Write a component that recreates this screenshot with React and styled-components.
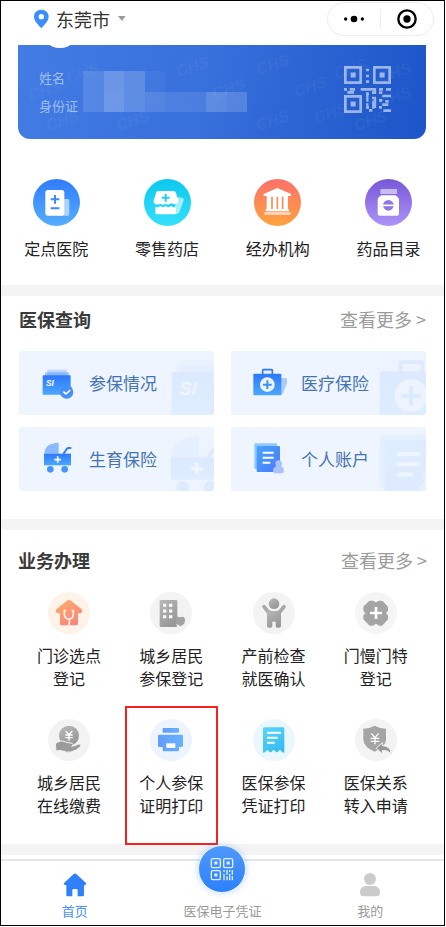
import React from 'react'
import styled, { createGlobalStyle } from 'styled-components'

const GlobalStyle = createGlobalStyle`
    * {
        box-sizing: border-box;
    }
    body {
        margin: 0;
        background: #fff;
        font-family: "Noto Sans CJK SC", "Noto Sans", sans-serif;
    }
    button {
        margin: 0;
        padding: 0;
        border: none;
        background: none;
        font: inherit;
        color: inherit;
        cursor: pointer;
    }
    a {
        color: inherit;
        text-decoration: none;
    }
    svg {
        display: block;
        flex-shrink: 0;
    }
    h2 {
        margin: 0;
    }
`

const Page = styled.div`
    margin: 0 1px 1px 0;
    border: 1px solid #000;
    background: #fff;
`

const Header = styled.header`
    display: flex;
    align-items: center;
    justify-content: space-between;
    height: 36px;
    margin-bottom: 8px;
    padding: 0 10px 0 32px;
`

const City = styled.button`
    display: flex;
    align-items: center;
    gap: 6px;
    font-size: 18px;
    line-height: 28px;
    color: #333;
`

const Capsule = styled.div`
    display: flex;
    align-items: center;
    width: 107px;
    height: 34px;
    border: 1px solid #ededed;
    border-radius: 17px;
`

const CapsuleButton = styled.button`
    flex: 1;
    display: flex;
    justify-content: center;
    & + & {
        border-left: 1px solid #ececec;
    }
`

const InsuredCard = styled.section`
    position: relative;
    display: flex;
    justify-content: space-between;
    align-items: flex-start;
    height: 94px;
    margin: 0 18px 0 17px;
    padding: 21px 35px 0 21px;
    border-radius: 0 0 12px 12px;
    background: linear-gradient(100deg, #427ce4 0%, #3870dc 45%, #1c55c8 100%);
    overflow: hidden;
`

const CardArt = styled.svg`
    position: absolute;
    top: 0;
    left: 0;
`

const Fields = styled.div`
    position: relative;
    display: flex;
    flex-direction: column;
    gap: 8px;
    padding-top: 2px;
    font-size: 13px;
    line-height: 20px;
    color: rgba(255, 255, 255, 0.52);
`

const QuickNav = styled.nav`
    display: grid;
    grid-template-columns: repeat(4, 1fr);
    padding: 40px 0 25px;
`

const QuickItem = styled.a`
    display: flex;
    flex-direction: column;
    align-items: center;
    gap: 10px;
    font-size: 16px;
    line-height: 24px;
    color: #222;
`

const Disc = styled.span`
    display: block;
    width: ${({ $size }) => $size}px;
    height: ${({ $size }) => $size}px;
    border-radius: 50%;
    background: ${({ $bg }) => $bg};
`

const Band = styled.div`
    height: 11px;
    background: #f4f4f4;
`

const Section = styled.section`
    padding: ${({ $pad }) => $pad};
`

const SectionHead = styled.div`
    display: flex;
    justify-content: space-between;
    align-items: center;
    margin-bottom: 18px;
    line-height: 28px;
`

const SectionTitle = styled.h2`
    font-size: 18px;
    font-weight: 700;
    color: #3a3a3a;
`

const More = styled.a`
    font-size: 18px;
    color: #9c9c9c;
`

const QueryGrid = styled.div`
    display: grid;
    grid-template-columns: 1fr 1fr;
    gap: 12px 17px;
`

const QueryCard = styled.a`
    position: relative;
    display: flex;
    align-items: center;
    gap: 14px;
    height: 64px;
    padding-left: 22px;
    border-radius: 2px;
    background: #eef5ff;
    overflow: hidden;
    font-size: 17px;
    line-height: 26px;
    color: #4673b1;
`

const Watermark = styled.svg`
    position: absolute;
    top: ${({ $top }) => $top}px;
    left: calc(100% - ${({ $shown }) => $shown}px);
    opacity: 0.09;
`

const ServiceGrid = styled.div`
    display: grid;
    grid-template-columns: repeat(4, 1fr);
    row-gap: 29px;
`

const ServiceItem = styled.a`
    position: relative;
    display: flex;
    flex-direction: column;
    align-items: center;
    gap: 10px;
    font-size: 16px;
    line-height: 23px;
    text-align: center;
    color: #222;
`

const Lines = styled.span`
    white-space: pre-line;
`

const Marker = styled.span`
    position: absolute;
    inset: -13px 5px -28px;
    border: 2px solid #f8221c;
`

const TabBar = styled.nav`
    display: grid;
    grid-template-columns: repeat(3, 1fr);
    margin-top: 4px;
    border-top: 2px solid #e6e6e6;
`

const Tab = styled.a`
    position: relative;
    display: flex;
    flex-direction: column;
    align-items: center;
    justify-content: flex-end;
    gap: 5px;
    padding: 12px 0 5px;
    font-size: 13px;
    line-height: 18px;
    color: ${({ $active }) => ($active ? '#4a90f5' : '#9a9a9a')};
`

const CodeButton = styled.span`
    position: absolute;
    top: -16px;
    left: calc(50% - 24px);
    display: flex;
    align-items: center;
    justify-content: center;
    width: 48px;
    height: 48px;
    border: 1px solid #e4f0ff;
    border-radius: 50%;
    background: linear-gradient(#5099fb, #2b80fb);
    box-shadow: 0 0 6px rgba(60, 140, 255, 0.35);
`

const GradientDefs = styled.svg`
    position: absolute;
`

const Gradients = () => (
    <GradientDefs width="0" height="0" aria-hidden="true">
        <defs>
            <linearGradient id="blue" x1="0" y1="0" x2="0" y2="1">
                <stop offset="0" stopColor="#2d78fb" />
                <stop offset="1" stopColor="#4aa8ff" />
            </linearGradient>
            <linearGradient id="page" x1="0" y1="0" x2="1" y2="1">
                <stop offset="0" stopColor="#45a6fd" />
                <stop offset="1" stopColor="#4b78fb" />
            </linearGradient>
            <linearGradient id="orange" x1="0" y1="0" x2="0.6" y2="1">
                <stop offset="0" stopColor="#fbaf68" />
                <stop offset="1" stopColor="#fd857c" />
            </linearGradient>
            <linearGradient id="gray" x1="0" y1="0" x2="0.6" y2="1">
                <stop offset="0" stopColor="#b9b9b9" />
                <stop offset="1" stopColor="#979797" />
            </linearGradient>
            <linearGradient id="print" x1="0" y1="0" x2="1" y2="0">
                <stop offset="0" stopColor="#629cfb" />
                <stop offset="1" stopColor="#67b2fc" />
            </linearGradient>
            <linearGradient id="cyan" x1="0" y1="0" x2="0.6" y2="1">
                <stop offset="0" stopColor="#5ad5f9" />
                <stop offset="1" stopColor="#37bdf4" />
            </linearGradient>
        </defs>
    </GradientDefs>
)

const quickItems = [
    {
        label: '定点医院',
        bg: 'linear-gradient(#2f7cfd, #55aefe)',
        art: (
            <>
                <rect x="70" y="60" width="39" height="50" rx="5" fill="#fff" opacity="0.55" />
                <rect x="37" y="33" width="57" height="77" rx="8" fill="#fff" />
                <path d="M66 48v26M53 61h26M53 88h26" stroke="#3b8bfd" strokeWidth="6" />
            </>
        ),
    },
    {
        label: '零售药店',
        bg: 'linear-gradient(#0bc8ee, #35e0fc)',
        art: (
            <>
                <path d="M100 54l14 2q7 2 5 9l-13 34q-2 6-9 6h-10z" fill="#fff" opacity="0.6" />
                <path d="M34 84q8 4 15-3q8 7 16 0q8 7 16 0q8 7 15 3v17q0 5-5 5H39q-5 0-5-5z" fill="#fff" />
                <path d="M43 36h46q4 0 6 4l8 24q1 9-6 10q-8 3-16-1q-8 7-16 1q-8 6-16 0q-9 5-17 0q-5-2-3-10l8-24q2-4 6-4z" fill="#fff" />
                <path d="M65 45v23M53 56h24" stroke="#19cff2" strokeWidth="6" />
            </>
        ),
    },
    {
        label: '经办机构',
        bg: 'linear-gradient(#fd7069, #fea33f)',
        art: (
            <>
                <path d="M70 27L111 45v6H102v40h3v6H35v-6h3V51H29v-6z" fill="#fff" />
                <path d="M54 53v37M70 53v37M86 53v37" stroke="#fe8b55" strokeWidth="5" />
                <rect x="31" y="99" width="79" height="9" rx="2" fill="#fff" opacity="0.6" />
            </>
        ),
    },
    {
        label: '药品目录',
        bg: 'linear-gradient(#7757d8, #ae93f8)',
        art: (
            <>
                <rect x="46" y="30" width="50" height="15" rx="2" fill="#fff" opacity="0.55" />
                <path d="M49 49h42q11 5 11 16v39q0 6-6 6H44q-6 0-6-6V65q0-11 11-16z" fill="#fff" />
                <circle cx="70" cy="79" r="16" fill="#9075e6" />
                <path d="M54 79h32" stroke="#fff" strokeWidth="5" />
            </>
        ),
    },
]

const queryItems = [
    {
        label: '参保情况',
        mark: { size: 76, top: 0, shown: 46 },
        art: (
            <>
                <rect x="19" y="11" width="58" height="20" fill="#4a8ffb" opacity="0.3" />
                <rect x="12" y="19" width="72" height="20" fill="#4a8ffb" opacity="0.45" />
                <rect x="5" y="28" width="84" height="58" rx="2" fill="url(#blue)" />
                <text x="15" y="59" fill="#fff" fontSize="25" fontWeight="700" fontStyle="italic" fontFamily="Liberation Sans, sans-serif">SI</text>
                <circle cx="77" cy="78" r="20" fill="#458ffb" />
                <path d="M67 77l8 7 13-12" fill="none" stroke="#fff" strokeWidth="5" />
            </>
        ),
    },
    {
        label: '医疗保险',
        mark: { size: 76, top: 3, shown: 47 },
        art: (
            <>
                <path d="M84 36h10q14 1 10 12L90 82q-2 5-8 5z" fill="#a9ccfd" />
                <path d="M29 24V13q0-2 2-2h25q2 0 2 2v11" fill="none" stroke="#2d78fb" strokeWidth="5" />
                <rect x="1" y="23" width="84" height="65" rx="3" fill="url(#blue)" />
                <circle cx="43" cy="56" r="22" fill="#eef5ff" />
                <path d="M43 43v26M30 56h26" stroke="#3c90fd" strokeWidth="6" />
            </>
        ),
    },
    {
        label: '生育保险',
        mark: { size: 65, top: 8, shown: 49 },
        art: (
            <>
                <path d="M10 35q1-31 43-33v33z" fill="#8ab9fd" />
                <path d="M67 36l11-16q2-2 5-2h8" fill="none" stroke="#2f7efb" strokeWidth="6" />
                <rect x="9" y="35" width="81" height="35" fill="url(#blue)" />
                <path d="M50 43v19M40 53h20" stroke="#fff" strokeWidth="5" />
                <circle cx="28" cy="82" r="10" fill="#4593fc" />
                <circle cx="71" cy="82" r="10" fill="#4593fc" />
            </>
        ),
    },
    {
        label: '个人账户',
        mark: { size: 70, top: 5, shown: 49 },
        art: (
            <>
                <rect x="4" y="4" width="68" height="77" rx="3" fill="#94c7fc" />
                <rect x="11" y="12" width="70" height="78" rx="3" fill="url(#page)" />
                <path d="M29 32h33M29 47h33M29 62h23" stroke="#fff" strokeWidth="6" />
                <circle cx="77" cy="65" r="10" fill="#a9c4fd" />
                <path d="M70 73h14q9 4 9 14 0 7-7 7H67q-7 0-7-7 0-11 10-14z" fill="#a9c4fd" />
            </>
        ),
    },
]

const serviceItems = [
    {
        label: '门诊选点\n登记',
        bg: '#fdf3e9',
        art: (
            <>
                <path d="M57 26q6-5 12 0l31 25q5 5 2 10-2 3-12 3v31q0 5-5 5H41q-5 0-5-5V64q-10 0-12-3-3-5 2-10z" fill="url(#orange)" />
                <path d="M54 56h-5v12q2 13 14 13t13-13V56h-5M63 81q4 9-1 20" fill="none" stroke="#fff6ee" strokeWidth="5" />
            </>
        ),
    },
    {
        label: '城乡居民\n参保登记',
        bg: '#f3f3f3',
        art: (
            <>
                <rect x="29" y="24" width="53" height="81" rx="4" fill="url(#gray)" />
                <path d="M39 40h10M57 40h10M39 57h10M57 57h10M39 74h10M57 74h10" stroke="#fff" strokeWidth="9" />
                <path d="M91 76q14-7 14 10 0 11-14 17-14-6-14-17 0-17 14-10z" fill="#a3a3a3" />
                <path d="M80 97l3 6 3-5" fill="none" stroke="#f3f3f3" strokeWidth="3" />
            </>
        ),
    },
    {
        label: '产前检查\n就医确认',
        bg: '#f3f3f3',
        art: (
            <>
                <circle cx="63" cy="35" r="16" fill="url(#gray)" />
                <path d="M33 44l12 15q18 8 36 0l12-15" fill="none" stroke="#a9a9a9" strokeWidth="11" strokeLinecap="round" />
                <path d="M42 56q21 9 42 0v46q0 5-5 5h-6q-5 0-5-5V89H58v13q0 5-5 5h-6q-5 0-5-5z" fill="url(#gray)" />
            </>
        ),
    },
    {
        label: '门慢门特\n登记',
        bg: '#f5f5f5',
        art: (
            <>
                <path d="M46 31h7l10 6 10-6h7l14 15v8l-6 9 6 9v8L80 96h-7l-10-7-10 7h-7L30 80v-8l6-9-6-9v-8z" fill="#a5a5a5" stroke="#a5a5a5" strokeWidth="10" strokeLinejoin="round" />
                <path d="M63 45v36M45 63h36" stroke="#fff" strokeWidth="8" />
            </>
        ),
    },
    {
        label: '城乡居民\n在线缴费',
        bg: '#f3f3f3',
        art: (
            <>
                <circle cx="63" cy="50" r="30" fill="url(#gray)" />
                <path d="M22 74q15-13 30-5 12 3 21 4 6 4-2 9 10-1 20-7 9-1 8 6-12 14-31 18-13 2-24-3-10-3-20 0z" fill="#9b9b9b" stroke="#f3f3f3" strokeWidth="3" />
                <path d="M53 36l10 11 10-11M63 47v18M52 48h22M52 56h22" fill="none" stroke="#fff" strokeWidth="4" />
            </>
        ),
    },
    {
        label: '个人参保\n证明打印',
        bg: '#edf3ff',
        marked: true,
        art: (
            <>
                <rect x="38" y="27" width="49" height="14" rx="2" fill="url(#print)" />
                <path d="M28 47h67q4 0 4 4v29q0 4-4 4h-8v9q0 4-4 4H42q-4 0-4-4v-9H28q-4 0-4-4V51q0-4 4-4z" fill="url(#print)" />
                <rect x="49" y="73" width="27" height="14" fill="#fff" />
            </>
        ),
    },
    {
        label: '医保参保\n凭证打印',
        bg: '#eaf7ff',
        art: (
            <>
                <path d="M34 25h56q4 0 4 4v72l-6-1-7-8-8 8h-3l-8-8-8 8h-3l-8-8-7 8-6 1V29q0-4 4-4z" fill="url(#cyan)" />
                <path d="M42 41h42M42 56h32M42 71h23" stroke="#fff" strokeWidth="6" />
            </>
        ),
    },
    {
        label: '医保关系\n转入申请',
        bg: '#f3f3f3',
        art: (
            <>
                <path d="M59 20q16 9 34 9v34q-2 22-34 35Q27 85 25 63V29q18 0 34-9z" fill="#a5a5a5" />
                <path d="M49 43l11 13 11-13M60 56v20M47 58h26M47 67h26" fill="none" stroke="#fff" strokeWidth="4" />
                <path d="M64 87l18-16v9q25 0 27 26-10-13-27-11v10z" fill="#969696" stroke="#f3f3f3" strokeWidth="3" />
            </>
        ),
    },
]

// pixelated strip over the name and the ID number: column, row, opacity
const mosaic = [
    [0, 0, 0.12], [1, 0, 0.24], [2, 0, 0.18], [3, 0, 0.04],
    [0, 1, 0.12], [1, 1, 0.26], [2, 1, 0.18], [3, 1, 0.13],
    [4, 1, 0.1], [5, 1, 0.1], [6, 1, 0.2], [7, 1, 0.17],
]

const stamps = [
    [12, 56], [50, 38], [160, 32], [240, 30], [318, 34], [196, 54], [278, 52],
    [100, 86], [30, 86], [298, 78], [240, 86], [338, 86], [362, 38], [362, 62],
]

const QrCode = () => (
    <svg width="47" height="47" viewBox="0 0 141 141" style={{ position: 'relative' }} fill="none" stroke="#fff" opacity="0.55">
        <path d="M4 4h46v46H4zM91 4h46v46H91zM4 91h46v46H4z" strokeWidth="8" />
        <path d="M20 27h15M107 27h15M20 114h15" strokeWidth="15" />
        <path d="M66 12h9M66 30h9M66 47h9M0 70h9M17 70h16M50 70h44M105 70h12M126 70h15M10 79h20M66 84h9M84 80h10M115 90h26M105 80h10M84 96h12M105 103h10M124 106h10M66 124h9M75 133h10M105 124h9M118 134h23M115 116h18" strokeWidth="8" />
        <path d="M70 79v28M88 104v24M93 96v30M70 112v16M93 66v18" strokeWidth="7" />
    </svg>
)

const App = () => {
    return (
        <>
            <GlobalStyle />
            <Gradients />
            <Page>
                <Header>
                    <City>
                        <svg width="17" height="20" viewBox="0 0 51 60">
                            <path d="M25 2C12 2 3 11 3 23c0 13 13 24 22 35 9-11 22-22 22-35C47 11 38 2 25 2z" fill="#3a8ffc" />
                            <circle cx="25" cy="23" r="8" fill="#fff" />
                        </svg>
                        东莞市
                        <svg width="11" height="6" viewBox="0 0 22 12">
                            <path d="M4 0h15l-7 10z" fill="#999" />
                        </svg>
                    </City>
                    <Capsule>
                        <CapsuleButton aria-label="更多">
                            <svg width="22" height="8" viewBox="0 0 66 24">
                                <circle cx="8" cy="12" r="5" />
                                <circle cx="33" cy="12" r="10" />
                                <circle cx="58" cy="12" r="5" />
                            </svg>
                        </CapsuleButton>
                        <CapsuleButton aria-label="关闭">
                            <svg width="20" height="20" viewBox="0 0 60 60">
                                <circle cx="30" cy="30" r="26" fill="none" stroke="#000" strokeWidth="7" />
                                <circle cx="30" cy="30" r="11" />
                            </svg>
                        </CapsuleButton>
                    </Capsule>
                </Header>

                <InsuredCard>
                    <CardArt width="408" height="94" aria-hidden="true">
                        {stamps.map(([x, y]) => (
                            <text key={`${x}-${y}`} x={x} y={y} transform={`rotate(-18 ${x} ${y})`} fill="#fff" opacity="0.04" fontSize="16" fontWeight="700" fontStyle="italic" fontFamily="Liberation Sans, sans-serif">CHS</text>
                        ))}
                        <g transform="translate(65 26) scale(20.5)" shapeRendering="crispEdges">
                            {mosaic.map(([x, y, o]) => (
                                <rect key={`${x}-${y}`} x={x} y={y} width="1" height="1" fill="#fff" opacity={o} />
                            ))}
                        </g>
                        <circle cx="42" cy="-17" r="20" fill="#fff" />
                    </CardArt>
                    <Fields>
                        <span>姓名</span>
                        <span>身份证</span>
                    </Fields>
                    <QrCode />
                </InsuredCard>

                <QuickNav>
                    {quickItems.map((item) => (
                        <QuickItem href="#" key={item.label}>
                            <Disc $size={47} $bg={item.bg}>
                                <svg width="47" height="47" viewBox="0 0 141 141">{item.art}</svg>
                            </Disc>
                            {item.label}
                        </QuickItem>
                    ))}
                </QuickNav>

                <Band />

                <Section $pad="9px 18px 28px">
                    <SectionHead>
                        <SectionTitle>医保查询</SectionTitle>
                        <More href="#">查看更多 &gt;</More>
                    </SectionHead>
                    <QueryGrid>
                        {queryItems.map((item) => (
                            <QueryCard href="#" key={item.label}>
                                <Watermark width={item.mark.size} height={item.mark.size} viewBox="0 0 102 102" $top={item.mark.top} $shown={item.mark.shown} aria-hidden="true">
                                    {item.art}
                                </Watermark>
                                <svg width="34" height="34" viewBox="0 0 102 102">{item.art}</svg>
                                {item.label}
                            </QueryCard>
                        ))}
                    </QueryGrid>
                </Section>

                <Band />

                <Section $pad="16px 17px 27px">
                    <SectionHead>
                        <SectionTitle>业务办理</SectionTitle>
                        <More href="#">查看更多 &gt;</More>
                    </SectionHead>
                    <ServiceGrid>
                        {serviceItems.map((item) => (
                            <ServiceItem href="#" key={item.label}>
                                {item.marked && <Marker />}
                                <Disc $size={42} $bg={item.bg}>
                                    <svg width="42" height="42" viewBox="0 0 126 126">{item.art}</svg>
                                </Disc>
                                <Lines>{item.label}</Lines>
                            </ServiceItem>
                        ))}
                    </ServiceGrid>
                </Section>

                <Band />

                <TabBar>
                    <Tab href="#" $active>
                        <svg width="24" height="24" viewBox="0 0 72 72">
                            <path d="M32 3q4-3 8 0l29 27q3 5-3 6h-3v30q0 4-4 4H44V52q0-4-4-4h-8q-4 0-4 4v18H14q-4 0-4-4V36H6q-6-1-3-6z" fill="#2f81fb" />
                        </svg>
                        首页
                    </Tab>
                    <Tab href="#">
                        <CodeButton>
                            <svg width="24" height="24" viewBox="0 0 72 72" fill="none" stroke="#e3efff" strokeWidth="4">
                                <rect x="4" y="5" width="27" height="27" rx="4" />
                                <rect x="41" y="5" width="27" height="27" rx="4" />
                                <rect x="4" y="41" width="27" height="27" rx="4" />
                                <path d="M13 18h9M50 18h9M13 54h9" strokeWidth="9" />
                                <path d="M42 39v6M42 50v20M51 39v14M51 58v12M59 39v6M59 50v20M67 39v14M67 58v12" />
                            </svg>
                        </CodeButton>
                        医保电子凭证
                    </Tab>
                    <Tab href="#">
                        <svg width="24" height="24" viewBox="0 0 72 72" fill="#cbcbcb">
                            <circle cx="36" cy="18" r="18" />
                            <path d="M22 39h28q16 3 16 19 0 12-9 12H15q-9 0-9-12 0-16 16-19z" />
                        </svg>
                        我的
                    </Tab>
                </TabBar>
            </Page>
        </>
    )
}

export default App
